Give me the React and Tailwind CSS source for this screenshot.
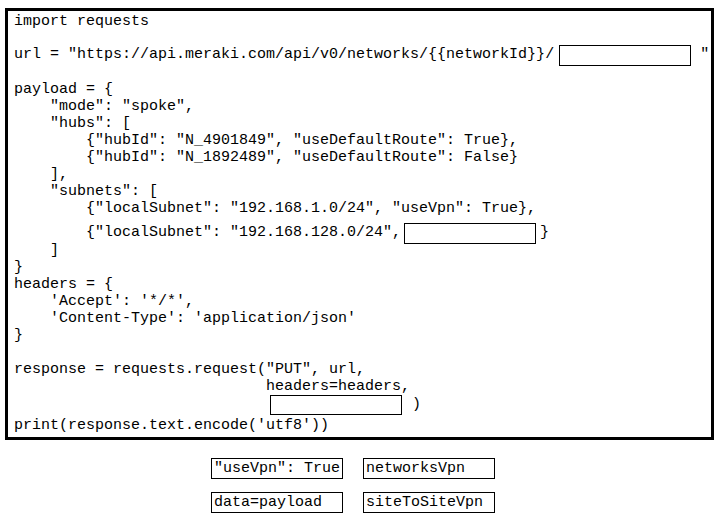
import React from 'react';

const Line = ({ children, className = '' }) => (
  <div className={`h-[17px] leading-[17px] whitespace-pre ${className}`}>{children || ' '}</div>
);

const Blank = ({ className = '' }) => (
  <div className={`border border-black bg-white ${className}`}></div>
);

const options = ['"useVpn": True', 'networksVpn', 'data=payload', 'siteToSiteVpn'];

export default function App() {
  return (
    <div className="w-[722px] h-[519px] bg-white text-black text-[15px] overflow-hidden font-['Liberation_Mono','Courier_New',monospace]">
      <div className="ml-[5px] mt-[8px] w-[709px] border-[3px] border-black pl-[6px] pt-[2px] pb-[3px]">
        <Line>import requests</Line>
        <Line />
        <div className="flex items-center h-[17px] whitespace-pre">
          <span>url = "https://api.meraki.com/api/v0/networks/{'{{'}networkId{'}}'}/</span>
          <Blank className="ml-[5px] w-[132px] h-[21px] shrink-0" />
          <span className="ml-[9px]">"</span>
        </div>
        <Line />
        <Line>payload = {'{'}</Line>
        <Line>{'    "mode": "spoke",'}</Line>
        <Line>{'    "hubs": ['}</Line>
        <Line>{'        {"hubId": "N_4901849", "useDefaultRoute": True},'}</Line>
        <Line>{'        {"hubId": "N_1892489", "useDefaultRoute": False}'}</Line>
        <Line>{'    ],'}</Line>
        <Line>{'    "subnets": ['}</Line>
        <Line>{'        {"localSubnet": "192.168.1.0/24", "useVpn": True},'}</Line>
        <div className="flex items-center h-[17px] mt-[8px] whitespace-pre">
          <span>{'        {"localSubnet": "192.168.128.0/24",'}</span>
          <Blank className="ml-[3px] w-[132px] h-[21px] shrink-0" />
          <span className="ml-[4px]">{'}'}</span>
        </div>
        <Line>{'    ]'}</Line>
        <Line>{'}'}</Line>
        <Line>{'headers = {'}</Line>
        <Line>{"    'Accept': '*/*',"}</Line>
        <Line>{"    'Content-Type': 'application/json'"}</Line>
        <Line>{'}'}</Line>
        <Line />
        <Line>{'response = requests.request("PUT", url,'}</Line>
        <Line>{'                            headers=headers,'}</Line>
        <div className="flex items-start h-[22px] pl-[256px] whitespace-pre">
          <Blank className="w-[132px] h-[20px] shrink-0" />
          <span className="ml-[10px] leading-[20px]">)</span>
        </div>
        <Line>{"print(response.text.encode('utf8'))"}</Line>
      </div>
      <div className="ml-[211px] mt-[18px] grid grid-cols-[132px_132px] gap-x-[20px] gap-y-[13px]">
        {options.map((opt) => (
          <div key={opt} className="h-[21px] border border-black pl-[2px] leading-[19px] whitespace-pre">
            {opt}
          </div>
        ))}
      </div>
    </div>
  );
}
